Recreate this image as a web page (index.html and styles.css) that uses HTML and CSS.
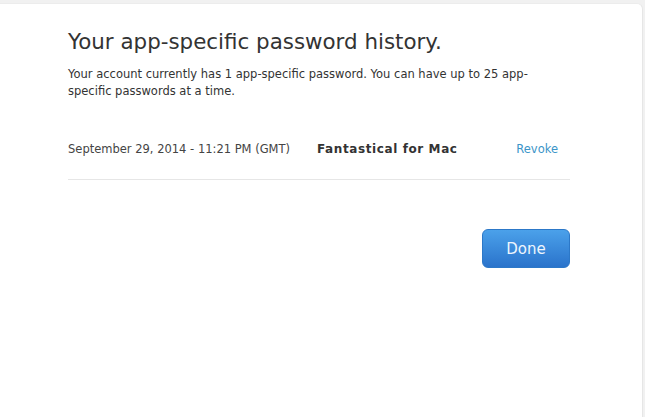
FILE: index.html
```html
<!DOCTYPE html>
<html lang="en">
<head>
    <meta charset="UTF-8">
    <meta name="viewport" content="width=device-width, initial-scale=1.0">
    <title>App-Specific Passwords</title>
    <link rel="stylesheet" href="styles.css">
</head>
<body>
    <div class="sheet">
        <div class="sheet-content">
            <h1 class="sheet-title">Your app-specific password history.</h1>
            <p class="sheet-intro">Your account currently has 1 app-specific password. You can have up to 25 app-specific passwords at a time.</p>

            <div class="pw-list">
                <div class="pw-row">
                    <span class="pw-date">September 29, 2014 - 11:21 PM (GMT)</span>
                    <span class="pw-name">Fantastical for Mac</span>
                    <a href="#" class="pw-revoke">Revoke</a>
                </div>
            </div>

            <div class="sheet-actions">
                <button class="done-button">Done</button>
            </div>
        </div>
    </div>
</body>
</html>
```

FILE: styles.css
```css
* {
    margin: 0;
    padding: 0;
    box-sizing: border-box;
}

html, body {
    height: 100%;
}

body {
    background-color: #f1f1f1;
    font-family: 'DejaVu Sans', 'Open Sans', sans-serif;
    color: #333;
    padding: 3px 2px 0 0;
}

.sheet {
    background: white;
    height: 100%;
    border-top-right-radius: 6px;
    border-right: 1px solid #e6e6e6;
    border-top: 1px solid #ececec;
}

.sheet-content {
    width: 570px;
    padding: 25px 0 0 68px;
}

.sheet-title {
    font-size: 21.4px;
    font-weight: normal;
    color: #333;
    line-height: 26px;
    margin-bottom: 11px;
}

.sheet-intro {
    font-size: 11.5px;
    line-height: 17px;
    color: #333;
}

.pw-list {
    margin-top: 33px;
}

.pw-row {
    display: grid;
    grid-template-columns: 249px 1fr auto;
    align-items: baseline;
    font-size: 11.5px;
    line-height: 16px;
    padding: 8px 12px 22px 0;
    border-bottom: 1px solid #e6e6e6;
}

.pw-date {
    color: #444;
}

.pw-name {
    font-size: 12px;
    font-weight: bold;
    letter-spacing: 0.6px;
    color: #333;
}

.pw-revoke {
    color: #3b95c8;
    text-decoration: none;
}

.sheet-actions {
    display: flex;
    justify-content: flex-end;
    margin-top: 49px;
}

.done-button {
    width: 88px;
    height: 39px;
    border: 1px solid #2c78c8;
    border-radius: 6px;
    background: linear-gradient(#4ba1ea, #2a73cb);
    color: #eef5fd;
    font-family: inherit;
    font-size: 15px;
    cursor: pointer;
}
```
